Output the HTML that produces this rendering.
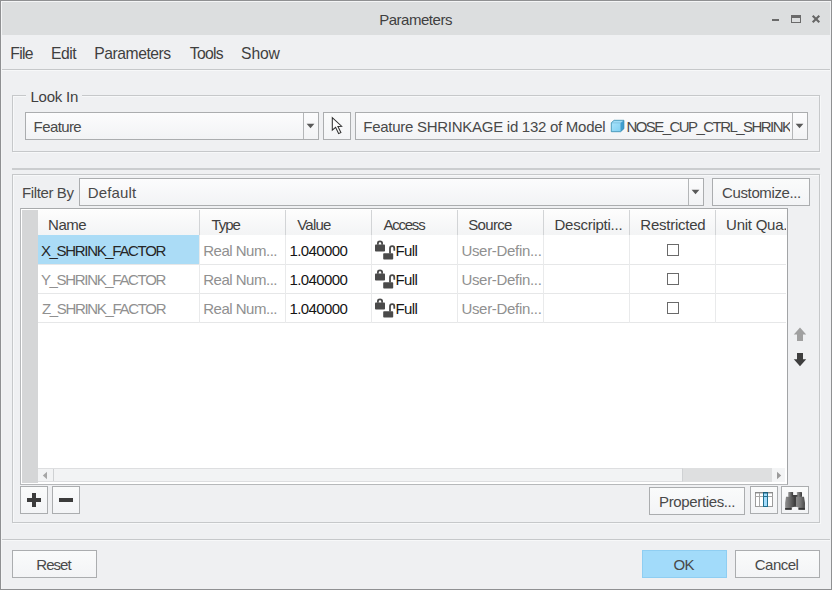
<!DOCTYPE html>
<html>
<head>
<meta charset="utf-8">
<title>Parameters</title>
<style>
html,body{margin:0;padding:0;}
body{width:832px;height:590px;overflow:hidden;background:#eff0f2;font-family:"Liberation Sans",sans-serif;position:relative;}
.a{position:absolute;}
.t{position:absolute;white-space:nowrap;line-height:21px;font-family:"Liberation Sans",sans-serif;}
.hl{position:absolute;height:1px;background:#c8cacc;}
.vl{position:absolute;width:1px;background:#c8cacc;}
.box{position:absolute;border:1px solid #abadaf;background:linear-gradient(#fcfcfd,#f2f3f5);box-sizing:border-box;}
.grp{position:absolute;border:1px solid #c6c8ca;box-sizing:border-box;box-shadow:1px 1px 0 #f7f8f9, inset 1px 1px 0 #f7f8f9;}
.btn{position:absolute;border:1px solid #abadaf;background:linear-gradient(#fafbfb,#f3f4f6);box-sizing:border-box;}
.cb{position:absolute;width:12px;height:12px;box-sizing:border-box;border:1px solid #6a6a6a;background:#fff;}
</style>
</head>
<body>
<!-- window frame -->
<div class="a" style="left:0;top:0;width:832px;height:590px;background:#8f9092;"></div>
<div class="a" style="left:1px;top:1px;width:830px;height:588px;background:#f4f5f6;"></div>
<div class="a" style="left:2px;top:2px;width:829px;height:587px;background:#eff0f2;"></div>
<div class="a" style="left:2px;top:2px;width:828px;height:33px;background:#dcdedf;"></div>
<!-- window controls -->
<div class="a" style="left:772px;top:19px;width:7px;height:2px;background:#6a6a6a;"></div>
<div class="a" style="left:791px;top:15px;width:10px;height:8px;box-sizing:border-box;border:1px solid #6a6a6a;border-top-width:3px;"></div>
<svg class="a" style="left:811px;top:14px" width="10" height="10" viewBox="0 0 10 10"><path d="M1.7 1.7 L8.3 8.3 M8.3 1.7 L1.7 8.3" stroke="#666" stroke-width="2.1"/></svg>
<!-- menu line -->
<div class="hl" style="left:2px;top:69px;width:828px;background:#c6c8ca;"></div>
<div class="hl" style="left:2px;top:70px;width:828px;background:#f7f8f9;"></div>

<!-- Look In group -->
<div class="grp" style="left:12px;top:95px;width:808px;height:57px;"></div>
<div class="a" style="left:26px;top:93px;width:56px;height:5px;background:#eff0f2;"></div>
<div class="box" style="left:25px;top:112px;width:294px;height:28px;"></div>
<div class="vl" style="left:303px;top:113px;height:26px;background:#b4b6b8;"></div>
<svg class="a" style="left:306px;top:123px" width="9" height="6" viewBox="0 0 9 6"><path d="M0.6 0.8 L8.4 0.8 L4.5 5.2 Z" fill="#595959"/></svg>
<div class="btn" style="left:323px;top:112px;width:28px;height:28px;"></div>
<svg class="a" style="left:328px;top:114px" width="18" height="24" viewBox="0 0 18 24"><path d="M4.3 3.6 L4.3 16.2 L7.6 13.3 L10.6 19.6 L12.9 18.5 L9.9 12.4 L13.6 12.2 Z" fill="#fdfdfd" stroke="#2f2f2f" stroke-width="1.05" stroke-linejoin="miter"/></svg>
<div class="box" style="left:355px;top:112px;width:453px;height:28px;"></div>
<div class="vl" style="left:792px;top:113px;height:26px;background:#b4b6b8;"></div>
<svg class="a" style="left:795px;top:123px" width="9" height="6" viewBox="0 0 9 6"><path d="M0.6 0.8 L8.4 0.8 L4.5 5.2 Z" fill="#595959"/></svg>
<!-- cube icon -->
<svg class="a" style="left:610px;top:119px" width="15" height="14" viewBox="0 0 15 14">
<defs><linearGradient id="cf" x1="0" y1="0" x2="1" y2="1"><stop offset="0" stop-color="#a9e3fb"/><stop offset="1" stop-color="#80cff1"/></linearGradient></defs>
<path d="M1.3 3.8 L10.6 3.8 L10.6 12.7 L1.3 12.7 Z" fill="url(#cf)"/>
<path d="M1.3 3.8 L4.1 1.3 L13.9 1.3 L10.6 3.8 Z" fill="#9fdcf7"/>
<path d="M10.6 3.8 L13.9 1.3 L13.9 9.7 L10.6 12.7 Z" fill="#3d9dd0"/>
<path d="M1.3 3.8 L4.1 1.3 L13.9 1.3 L13.9 9.7 L10.6 12.7 L1.3 12.7 Z" fill="none" stroke="#2a84a9" stroke-width="0.75" stroke-linejoin="round"/>
<path d="M1.3 3.8 L10.6 3.8 L10.6 12.7" fill="none" stroke="#4aa6cf" stroke-width="0.5"/>
</svg>

<!-- separator -->
<div class="hl" style="left:12px;top:168px;width:808px;height:2px;background:#cbcdcf;"></div>

<!-- Filter group -->
<div class="grp" style="left:12px;top:174px;width:808px;height:349px;"></div>
<div class="box" style="left:79px;top:178px;width:625px;height:28px;"></div>
<div class="vl" style="left:688px;top:179px;height:26px;background:#b4b6b8;"></div>
<svg class="a" style="left:691px;top:189px" width="9" height="6" viewBox="0 0 9 6"><path d="M0.6 0.8 L8.4 0.8 L4.5 5.2 Z" fill="#595959"/></svg>
<div class="btn" style="left:712px;top:178px;width:98px;height:28px;"></div>

<!-- table -->
<div class="a" style="left:20px;top:208px;width:768px;height:277px;background:#fff;box-sizing:border-box;border:1px solid #b6b8ba;border-top-color:#a8aaac;border-right-color:#a2a4a6;"></div>
<div class="a" style="left:22px;top:210px;width:16px;height:273px;background:#d5d6d7;"></div>
<div class="a" style="left:38px;top:210px;width:749px;height:25px;background:linear-gradient(#fdfdfd,#f3f4f5);"></div>
<!-- row lines -->
<div class="hl" style="left:38px;top:264px;width:748px;background:#e6e7e8;"></div>
<div class="hl" style="left:38px;top:293px;width:748px;background:#e6e7e8;"></div>
<div class="hl" style="left:38px;top:322px;width:748px;background:#e6e7e8;"></div>
<div class="a" style="left:38px;top:235px;width:161px;height:29px;background:#abdcf6;"></div>
<div class="vl" style="left:199px;top:210px;height:25px;background:#d2d4d6;"></div>
<div class="vl" style="left:199px;top:235px;height:88px;background:#e9eaeb;"></div>
<div class="vl" style="left:285px;top:210px;height:25px;background:#d2d4d6;"></div>
<div class="vl" style="left:285px;top:235px;height:88px;background:#e9eaeb;"></div>
<div class="vl" style="left:371px;top:210px;height:25px;background:#d2d4d6;"></div>
<div class="vl" style="left:371px;top:235px;height:88px;background:#e9eaeb;"></div>
<div class="vl" style="left:457px;top:210px;height:25px;background:#d2d4d6;"></div>
<div class="vl" style="left:457px;top:235px;height:88px;background:#e9eaeb;"></div>
<div class="vl" style="left:543px;top:210px;height:25px;background:#d2d4d6;"></div>
<div class="vl" style="left:543px;top:235px;height:88px;background:#e9eaeb;"></div>
<div class="vl" style="left:629px;top:210px;height:25px;background:#d2d4d6;"></div>
<div class="vl" style="left:629px;top:235px;height:88px;background:#e9eaeb;"></div>
<div class="vl" style="left:715px;top:210px;height:25px;background:#d2d4d6;"></div>
<div class="vl" style="left:715px;top:235px;height:88px;background:#e9eaeb;"></div>
<div class="cb" style="left:667px;top:244px;"></div>
<svg class="a" style="left:374px;top:240px" width="22" height="21" viewBox="0 0 22 21">
<path d="M3.9 4.8 L3.9 3.2 Q3.9 1.3 6 1.3 Q8.1 1.3 8.1 3.2 L8.1 4.8" fill="none" stroke="#4a4a4a" stroke-width="1.8"/>
<rect x="1" y="4.6" width="10" height="7" rx="0.8" fill="#4a4a4a"/>
<path d="M16 13.4 L16 8.4 Q16 6.2 18.2 6.2 Q20.3 6.2 20.3 8.4 L20.3 10.8" fill="none" stroke="#4a4a4a" stroke-width="1.8"/>
<rect x="9.2" y="13.2" width="10" height="6.4" rx="0.8" fill="#4a4a4a"/>
</svg>
<div class="cb" style="left:667px;top:273px;"></div>
<svg class="a" style="left:374px;top:269px" width="22" height="21" viewBox="0 0 22 21">
<path d="M3.9 4.8 L3.9 3.2 Q3.9 1.3 6 1.3 Q8.1 1.3 8.1 3.2 L8.1 4.8" fill="none" stroke="#4a4a4a" stroke-width="1.8"/>
<rect x="1" y="4.6" width="10" height="7" rx="0.8" fill="#4a4a4a"/>
<path d="M16 13.4 L16 8.4 Q16 6.2 18.2 6.2 Q20.3 6.2 20.3 8.4 L20.3 10.8" fill="none" stroke="#4a4a4a" stroke-width="1.8"/>
<rect x="9.2" y="13.2" width="10" height="6.4" rx="0.8" fill="#4a4a4a"/>
</svg>
<div class="cb" style="left:667px;top:302px;"></div>
<svg class="a" style="left:374px;top:298px" width="22" height="21" viewBox="0 0 22 21">
<path d="M3.9 4.8 L3.9 3.2 Q3.9 1.3 6 1.3 Q8.1 1.3 8.1 3.2 L8.1 4.8" fill="none" stroke="#4a4a4a" stroke-width="1.8"/>
<rect x="1" y="4.6" width="10" height="7" rx="0.8" fill="#4a4a4a"/>
<path d="M16 13.4 L16 8.4 Q16 6.2 18.2 6.2 Q20.3 6.2 20.3 8.4 L20.3 10.8" fill="none" stroke="#4a4a4a" stroke-width="1.8"/>
<rect x="9.2" y="13.2" width="10" height="6.4" rx="0.8" fill="#4a4a4a"/>
</svg>

<!-- scrollbar -->
<div class="a" style="left:38px;top:468px;width:747px;height:14px;background:#dedfe0;"></div>
<div class="a" style="left:38px;top:468px;width:645px;height:14px;background:#f2f3f4;border-top:1px solid #dddee0;border-bottom:1px solid #dddee0;border-right:1px solid #cfd1d3;box-sizing:border-box;"></div>
<div class="vl" style="left:53px;top:469px;height:12px;background:#cfd1d3;"></div>
<div class="a" style="left:772px;top:468px;width:13px;height:14px;background:#f3f4f5;"></div>
<svg class="a" style="left:42px;top:471px" width="6" height="9" viewBox="0 0 6 9"><path d="M5 0.8 L5 8.2 L0.8 4.5 Z" fill="#a6a6a6"/></svg>
<svg class="a" style="left:776px;top:471px" width="6" height="9" viewBox="0 0 6 9"><path d="M1 0.8 L1 8.2 L5.2 4.5 Z" fill="#9a9a9a"/></svg>

<!-- up/down arrows -->
<svg class="a" style="left:793px;top:327px" width="14" height="15" viewBox="0 0 14 15"><path d="M7 0.6 L13.2 7.6 L10 7.6 L10 14 L4 14 L4 7.6 L0.8 7.6 Z" fill="#a0a0a0"/></svg>
<svg class="a" style="left:793px;top:352px" width="14" height="15" viewBox="0 0 14 15"><path d="M7 14.2 L13.2 7.2 L10 7.2 L10 1 L4 1 L4 7.2 L0.8 7.2 Z" fill="#3e3e3e"/></svg>

<!-- +/- buttons -->
<div class="btn" style="left:20px;top:486px;width:28px;height:28px;"></div>
<div class="btn" style="left:52px;top:486px;width:28px;height:28px;"></div>
<div class="a" style="left:27px;top:498px;width:14px;height:4px;background:#3c3c3c;"></div>
<div class="a" style="left:32px;top:493px;width:4px;height:14px;background:#3c3c3c;"></div>
<div class="a" style="left:59px;top:498px;width:14px;height:4px;background:#3c3c3c;"></div>

<!-- Properties & icon buttons -->
<div class="btn" style="left:649px;top:487px;width:96px;height:28px;"></div>
<div class="btn" style="left:750px;top:486px;width:28px;height:28px;"></div>
<div class="btn" style="left:781px;top:486px;width:28px;height:28px;"></div>
<svg class="a" style="left:750px;top:486px" width="28" height="28" viewBox="0 0 28 28">
<rect x="5.5" y="6.5" width="17" height="14" fill="#fff" stroke="#9c9c9c" stroke-width="1"/>
<rect x="5" y="6" width="18" height="1.4" fill="#8a8a8a"/>
<path d="M9.5 7 L9.5 20.5" stroke="#a8a8a8" stroke-width="1"/>
<path d="M5.5 10.5 L22.5 10.5" stroke="#a8a8a8" stroke-width="1"/>
<rect x="13.5" y="6.5" width="4" height="14" fill="#a4dcfc" stroke="#21708f" stroke-width="1"/>
<rect x="13" y="6" width="5" height="1.5" fill="#1b5f7c"/>
<path d="M13.5 10.5 L17.5 10.5" stroke="#21708f" stroke-width="1"/>
</svg>
<svg class="a" style="left:781px;top:486px" width="28" height="28" viewBox="0 0 28 28">
<defs>
<linearGradient id="b1" x1="0" x2="1"><stop offset="0" stop-color="#909090"/><stop offset="0.55" stop-color="#6a6a6a"/><stop offset="1" stop-color="#454545"/></linearGradient>
<linearGradient id="b2" x1="0" x2="1"><stop offset="0" stop-color="#8c8c8c"/><stop offset="0.5" stop-color="#757575"/><stop offset="1" stop-color="#484848"/></linearGradient>
<linearGradient id="b3" x1="0" x2="1"><stop offset="0" stop-color="#9a9a9a"/><stop offset="1" stop-color="#383838"/></linearGradient>
</defs>
<rect x="7.2" y="5.9" width="4.9" height="5" rx="0.6" fill="url(#b3)"/>
<rect x="15.9" y="5.9" width="5.1" height="5" rx="0.6" fill="url(#b3)"/>
<rect x="11.5" y="9" width="5" height="11.8" fill="#3f3f3f"/>
<path d="M5 10.7 L13.2 10.7 L13.2 20.8 L10.6 21.6 L10.6 23.7 L4.2 23.7 Q3.6 17 5 10.7 Z" fill="url(#b1)"/>
<path d="M15 10.7 L23 10.7 Q24.6 17 23.9 23.7 L17.5 23.7 L17.5 21.6 L15 20.8 Z" fill="url(#b2)"/>
<path d="M4.1 21.9 L10.6 21.9 L10.6 23.7 L4.2 23.7 Z" fill="#363636"/>
<path d="M17.5 21.9 L23.9 21.9 L23.9 23.7 L17.5 23.7 Z" fill="#363636"/>
</svg>

<!-- bottom separator -->
<div class="hl" style="left:2px;top:539px;width:828px;background:#c6c8ca;"></div>
<div class="hl" style="left:2px;top:540px;width:828px;background:#f7f8f9;"></div>
<div class="btn" style="left:12px;top:550px;width:85px;height:28px;"></div>
<div class="a" style="left:642px;top:550px;width:85px;height:28px;background:#a2dbfa;border:1px solid #8fcef2;box-sizing:border-box;"></div>
<div class="btn" style="left:735px;top:550px;width:85px;height:28px;"></div>

<!-- texts -->
<div class="t" style="left:379.2px;top:9px;font-size:15px;letter-spacing:-0.48px;color:#3f3f3f;">Parameters</div>
<div class="t" style="left:10.3px;top:43px;font-size:15.7px;letter-spacing:-0.67px;color:#3f3f3f;">File</div>
<div class="t" style="left:51.1px;top:43px;font-size:15.7px;letter-spacing:-0.50px;color:#3f3f3f;">Edit</div>
<div class="t" style="left:94.3px;top:43px;font-size:15.7px;letter-spacing:-0.47px;color:#3f3f3f;">Parameters</div>
<div class="t" style="left:189.8px;top:43px;font-size:15.7px;letter-spacing:-0.70px;color:#3f3f3f;">Tools</div>
<div class="t" style="left:241.1px;top:43px;font-size:15.7px;letter-spacing:-0.17px;color:#3f3f3f;">Show</div>
<div class="t" style="left:30.4px;top:86px;font-size:15px;letter-spacing:-0.20px;color:#3f3f3f;">Look In</div>
<div class="t" style="left:33.6px;top:116px;font-size:15px;letter-spacing:-0.60px;color:#494949;">Feature</div>
<div class="t" style="left:363.3px;top:116px;font-size:15px;letter-spacing:-0.27px;color:#494949;">Feature SHRINKAGE id 132 of Model</div>
<div class="t" style="left:626.4px;top:116px;font-size:15px;letter-spacing:-1.55px;color:#494949;width:163.6px;overflow:hidden;">NOSE_CUP_CTRL_SHRINK</div>
<div class="t" style="left:22.1px;top:182px;font-size:15px;letter-spacing:-0.39px;color:#494949;">Filter By</div>
<div class="t" style="left:87.8px;top:182px;font-size:15px;letter-spacing:0.15px;color:#494949;">Default</div>
<div class="t" style="left:722.1px;top:182px;font-size:15px;letter-spacing:-0.39px;color:#494949;">Customize...</div>
<div class="t" style="left:48.1px;top:214px;font-size:15px;letter-spacing:-0.50px;color:#3f3f3f;">Name</div>
<div class="t" style="left:211.4px;top:214px;font-size:15px;letter-spacing:-1.00px;color:#3f3f3f;">Type</div>
<div class="t" style="left:297.2px;top:214px;font-size:15px;letter-spacing:-0.75px;color:#3f3f3f;">Value</div>
<div class="t" style="left:383.4px;top:214px;font-size:15px;letter-spacing:-1.22px;color:#3f3f3f;">Access</div>
<div class="t" style="left:468.3px;top:214px;font-size:15px;letter-spacing:-0.70px;color:#3f3f3f;">Source</div>
<div class="t" style="left:554.5px;top:214px;font-size:15px;letter-spacing:-0.25px;color:#3f3f3f;">Descripti...</div>
<div class="t" style="left:640.3px;top:214px;font-size:15px;letter-spacing:-0.24px;color:#3f3f3f;">Restricted</div>
<div class="t" style="left:726.1px;top:214px;font-size:15px;letter-spacing:-0.25px;color:#3f3f3f;width:60.4px;overflow:hidden;">Unit Qua...</div>
<div class="t" style="left:40.9px;top:240px;font-size:15px;letter-spacing:-1.32px;color:#262626;">X_SHRINK_FACTOR</div>
<div class="t" style="left:203.2px;top:240px;font-size:15px;letter-spacing:-0.49px;color:#909090;">Real Num...</div>
<div class="t" style="left:289.4px;top:240px;font-size:15px;letter-spacing:-0.57px;color:#151515;">1.040000</div>
<div class="t" style="left:395.5px;top:240px;font-size:15px;letter-spacing:-0.60px;color:#151515;">Full</div>
<div class="t" style="left:461.4px;top:240px;font-size:15px;letter-spacing:-0.31px;color:#909090;">User-Defin...</div>
<div class="t" style="left:40.9px;top:269px;font-size:15px;letter-spacing:-1.32px;color:#909090;">Y_SHRINK_FACTOR</div>
<div class="t" style="left:203.2px;top:269px;font-size:15px;letter-spacing:-0.49px;color:#909090;">Real Num...</div>
<div class="t" style="left:289.4px;top:269px;font-size:15px;letter-spacing:-0.57px;color:#151515;">1.040000</div>
<div class="t" style="left:395.5px;top:269px;font-size:15px;letter-spacing:-0.60px;color:#151515;">Full</div>
<div class="t" style="left:461.4px;top:269px;font-size:15px;letter-spacing:-0.31px;color:#909090;">User-Defin...</div>
<div class="t" style="left:41.9px;top:298px;font-size:15px;letter-spacing:-1.32px;color:#909090;">Z_SHRINK_FACTOR</div>
<div class="t" style="left:203.2px;top:298px;font-size:15px;letter-spacing:-0.49px;color:#909090;">Real Num...</div>
<div class="t" style="left:289.4px;top:298px;font-size:15px;letter-spacing:-0.57px;color:#151515;">1.040000</div>
<div class="t" style="left:395.5px;top:298px;font-size:15px;letter-spacing:-0.60px;color:#151515;">Full</div>
<div class="t" style="left:461.4px;top:298px;font-size:15px;letter-spacing:-0.31px;color:#909090;">User-Defin...</div>
<div class="t" style="left:659.1px;top:491px;font-size:15px;letter-spacing:-0.37px;color:#494949;">Properties...</div>
<div class="t" style="left:36.3px;top:554px;font-size:15px;letter-spacing:-0.95px;color:#494949;">Reset</div>
<div class="t" style="left:673.5px;top:554px;font-size:15px;letter-spacing:-0.70px;color:#494949;">OK</div>
<div class="t" style="left:754.8px;top:554px;font-size:15px;letter-spacing:-0.54px;color:#494949;">Cancel</div>

</body>
</html>
